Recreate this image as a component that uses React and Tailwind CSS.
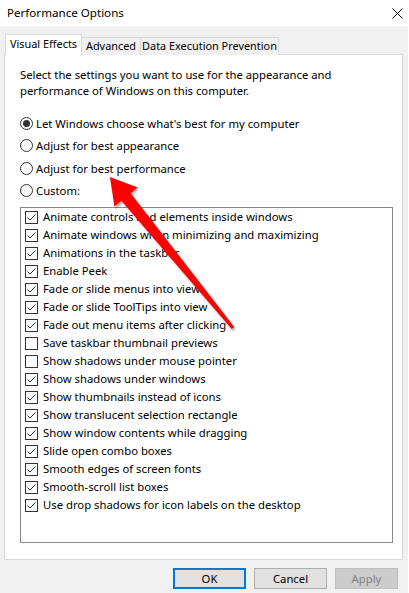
import React from "react";

const items = [
  ["Animate controls and elements inside windows", true],
  ["Animate windows when minimizing and maximizing", true],
  ["Animations in the taskbar", true],
  ["Enable Peek", true],
  ["Fade or slide menus into view", true],
  ["Fade or slide ToolTips into view", true],
  ["Fade out menu items after clicking", true],
  ["Save taskbar thumbnail previews", false],
  ["Show shadows under mouse pointer", false],
  ["Show shadows under windows", true],
  ["Show thumbnails instead of icons", true],
  ["Show translucent selection rectangle", true],
  ["Show window contents while dragging", true],
  ["Slide open combo boxes", true],
  ["Smooth edges of screen fonts", true],
  ["Smooth-scroll list boxes", true],
  ["Use drop shadows for icon labels on the desktop", true],
];

const radios = [
  ["Let Windows choose what's best for my computer", true],
  ["Adjust for best appearance", false],
  ["Adjust for best performance", false],
  ["Custom:", false],
];

function Radio({ checked }) {
  return (
    <div className="w-[13px] h-[13px] rounded-full border border-[#333333] bg-white flex items-center justify-center shrink-0">
      {checked && <div className="w-[7px] h-[7px] rounded-full bg-[#333333]" />}
    </div>
  );
}

function Check({ checked }) {
  return (
    <div className="w-[13px] h-[13px] border border-[#333333] bg-white shrink-0 relative">
      {checked && (
        <svg width="11" height="11" viewBox="0 0 11 11" className="absolute left-0 top-0">
          <polyline points="1.5,5.5 4,8 9.5,2.5" fill="none" stroke="#333333" strokeWidth="1" />
        </svg>
      )}
    </div>
  );
}

export default function App() {
  return (
    <div
      className="relative w-[409px] h-[593px] bg-white overflow-hidden text-[11.3px] text-black"
      style={{ fontFamily: "'Noto Sans', 'Open Sans', sans-serif" }}
    >
      <div className="w-[408px] h-full bg-[#f0f0f0] flex flex-col">
        {/* title bar */}
        <div className="h-[26px] bg-white flex items-center justify-between pl-[7px] pr-[5px] shrink-0">
          <span className="leading-none text-[11.6px]">Performance Options</span>
          <svg width="11" height="11" viewBox="0 0 11 11">
            <path d="M0.5 0.5 L10.5 10.5 M10.5 0.5 L0.5 10.5" stroke="#000" strokeWidth="1" />
          </svg>
        </div>

        {/* tabs */}
        <div className="flex items-end pl-[5px] mt-[8px] h-[21px] relative z-10 text-[10.9px] whitespace-nowrap">
          <div className="w-[77px] h-[21px] bg-white border border-[#d9d9d9] border-b-0 flex items-center justify-center leading-none pb-[1px]">
            Visual Effects
          </div>
          <div className="w-[59px] h-[18px] bg-[#f0f0f0] border border-[#d9d9d9] border-l-0 border-b-0 flex items-center justify-center leading-none">
            Advanced
          </div>
          <div className="w-[138px] h-[18px] bg-[#f0f0f0] border border-[#d9d9d9] border-l-0 border-b-0 flex items-center justify-center leading-none">
            Data Execution Prevention
          </div>
        </div>

        {/* panel */}
        <div className="mx-[4px] mr-[5px] -mt-px h-[506px] bg-white border border-[#d9d9d9] pl-[15px] pt-[12px] flex flex-col">
          <p className="leading-[16px]">
            Select the settings you want to use for the appearance and
            <br />
            performance of Windows on this computer.
          </p>
          <div className="mt-[13px] flex flex-col">
            {radios.map(([label, checked]) => (
              <div key={label} className="h-[22.5px] flex items-center gap-[3px]">
                <Radio checked={checked} />
                <span className="leading-none">{label}</span>
              </div>
            ))}
          </div>
          <div className="mt-[5px] w-[373px] h-[336px] border border-[#828790] pl-[4px] flex flex-col">
            {items.map(([label, checked]) => (
              <div key={label} className="h-[18px] flex items-center gap-[5px] shrink-0">
                <Check checked={checked} />
                <span className="leading-none">{label}</span>
              </div>
            ))}
          </div>
        </div>

        {/* buttons */}
        <div className="flex justify-end gap-[8px] pr-[10px] mt-[8px]">
          <button className="w-[73px] h-[21px] bg-[#e1e1e1] border-2 border-[#0078d7] flex items-center justify-center leading-none">
            OK
          </button>
          <button className="w-[73px] h-[21px] bg-[#e1e1e1] border border-[#adadad] flex items-center justify-center leading-none">
            Cancel
          </button>
          <button className="w-[63px] h-[21px] bg-[#cccccc] border border-[#bfbfbf] text-[#838383] flex items-center justify-center leading-none">
            Apply
          </button>
        </div>
      </div>

      {/* red annotation arrow */}
      <svg className="absolute inset-0 pointer-events-none" width="409" height="593" viewBox="0 0 409 593">
        <defs>
          <filter id="sh" x="-20%" y="-20%" width="140%" height="140%">
            <feGaussianBlur stdDeviation="1" />
          </filter>
        </defs>
        <polygon
          points="111.5,179 139,189 132,195 235.5,329 233,331 123,202.5 116,208.5"
          fill="#000"
          opacity="0.35"
          filter="url(#sh)"
        />
        <polygon
          points="110,177 137.6,187.5 130.6,193.2 234.2,327 231.8,329 121.4,200.8 114.4,206.5"
          fill="#ff0000"
        />
      </svg>
    </div>
  );
}
